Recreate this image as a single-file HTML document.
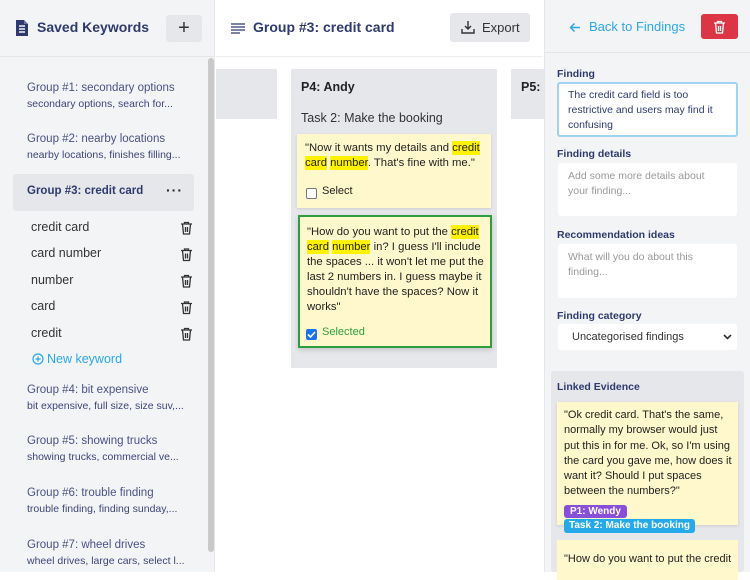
<!DOCTYPE html>
<html><head><style>
*{box-sizing:border-box;margin:0;padding:0}
body{width:750px;height:572px;overflow:hidden;font-family:"Liberation Sans",sans-serif;background:#fff;position:relative;color:#333}
.a{position:absolute;white-space:nowrap}
.nav{color:#2e3a6e}
.gt{font-size:11.5px;color:#4a5187;left:27px}
.gs{font-size:10.5px;color:#3d4479;left:27px}
.kw{font-size:12.5px;color:#333;left:31px}
.lbl{font-size:10.5px;font-weight:bold;color:#2e3a6e;left:557px}
.ta{background:#fff;border-radius:3px;font-size:10.5px;line-height:15px;color:#999;padding:6px 10px}
.hl{background:#fff200;padding:1px 0}
.card{background:#fff8cc;font-size:11.3px;line-height:15px;color:#222;padding:7px 8px}
</style></head><body>
<!-- left sidebar -->
<div class="a" style="left:0;top:0;width:215px;height:572px;background:#f3f4f6;border-right:1px solid #e4e6ea"></div>
<div class="a" style="left:0;top:56px;width:215px;height:1px;background:#e4e6ea"></div>
<svg class="a" style="left:15px;top:19px" width="14" height="18" viewBox="0 0 14 18"><path d="M1 1h8l4 4v12H1z" fill="#2e3a6e"/><path d="M4 7h6M4 10h6M4 13h6" stroke="#f3f4f6" stroke-width="1.4"/><path d="M9 1v4h4" fill="#6b74a5"/></svg>
<div class="a nav" style="left:37px;top:19px;font-size:14px;font-weight:bold">Saved Keywords</div>
<div class="a" style="left:166px;top:15px;width:36px;height:27px;background:#e5e7eb;border-radius:3px;text-align:center;font-size:20px;line-height:26px;color:#333">+</div>
<div class="a" style="left:208px;top:58px;width:6px;height:494px;background:#c9c9c9;border-radius:3px"></div>
<div class="a gt" style="top:82px">Group #1: secondary options</div>
<div class="a gs" style="top:98px">secondary options, search for...</div>
<div class="a gt" style="top:133px">Group #2: nearby locations</div>
<div class="a gs" style="top:149px">nearby locations, finishes filling...</div>
<div class="a" style="left:13px;top:174px;width:181px;height:37px;background:#e5e7eb;border-radius:3px"></div>
<div class="a" style="left:27px;top:185px;font-size:11.5px;font-weight:bold;color:#2e3a6e">Group #3: credit card</div>
<div class="a" style="left:166px;top:182px;font-size:14px;font-weight:bold;color:#222;letter-spacing:1px">···</div>
<div class="a kw" style="top:220px">credit card</div>
<div class="a kw" style="top:246px">card number</div>
<div class="a kw" style="top:273px">number</div>
<div class="a kw" style="top:299px">card</div>
<div class="a kw" style="top:326px">credit</div>
<svg class="a" style="left:180px;top:221px" width="13" height="120" viewBox="0 0 13 120"><g fill="none" stroke="#333" stroke-width="1.3"><g id="t"><path d="M1 3h11M4.5 3V1.5h4V3M2.5 3l1 10h6l1-10M5.5 6v5M7.5 6v5"/></g><use href="#t" y="26.5"/><use href="#t" y="53"/><use href="#t" y="79.5"/><use href="#t" y="106"/></g></svg>
<svg class="a" style="left:32px;top:353px" width="12" height="12" viewBox="0 0 12 12"><circle cx="6" cy="6" r="5" fill="none" stroke="#2aa8e8" stroke-width="1.2"/><path d="M6 3.5v5M3.5 6h5" stroke="#2aa8e8" stroke-width="1.2"/></svg>
<div class="a" style="left:47px;top:352px;font-size:12.5px;color:#2aa8e8">New keyword</div>
<div class="a gt" style="top:384px">Group #4: bit expensive</div>
<div class="a gs" style="top:400px">bit expensive, full size, size suv,...</div>
<div class="a gt" style="top:435px">Group #5: showing trucks</div>
<div class="a gs" style="top:451px">showing trucks, commercial ve...</div>
<div class="a gt" style="top:487px">Group #6: trouble finding</div>
<div class="a gs" style="top:503px">trouble finding, finding sunday,...</div>
<div class="a gt" style="top:539px">Group #7: wheel drives</div>
<div class="a gs" style="top:555px">wheel drives, large cars, select l...</div>
<!-- middle -->
<div class="a" style="left:216px;top:56px;width:327px;height:1px;background:#eceef1"></div>
<svg class="a" style="left:231px;top:23px" width="14" height="11"><path d="M0 1h14M0 4h14M0 7h14M0 10h9" stroke="#2e3a6e" stroke-width="1.2"/></svg>
<div class="a nav" style="left:253px;top:19px;font-size:14px;font-weight:bold">Group #3: credit card</div>
<div class="a" style="left:450px;top:13px;width:80px;height:29px;background:#e5e7eb;border-radius:3px"></div>
<svg class="a" style="left:461px;top:20px" width="14" height="14" viewBox="0 0 14 14"><path d="M7 1v8M4 6l3 3 3-3M1 9v4h12V9" fill="none" stroke="#333" stroke-width="1.4"/></svg>
<div class="a" style="left:482px;top:20px;font-size:13px;color:#333">Export</div>
<div class="a" style="left:216px;top:69px;width:61px;height:50px;background:#e5e7eb"></div>
<div class="a" style="left:291px;top:69px;width:206px;height:299px;background:#e5e7eb"></div>
<div class="a" style="left:511px;top:69px;width:40px;height:50px;background:#e5e7eb"></div>
<div class="a" style="left:301px;top:80px;font-size:12.5px;font-weight:bold;color:#222">P4: Andy</div>
<div class="a" style="left:521px;top:80px;font-size:12.5px;font-weight:bold;color:#222">P5:</div>
<div class="a" style="left:301px;top:111px;font-size:12.5px;color:#333">Task 2: Make the booking</div>
<div class="a card" style="left:297px;top:134px;width:194px;height:74px;box-shadow:0 1px 3px rgba(0,0,0,.12)">"Now it wants my details and <span class="hl">credit</span><br><span class="hl">card</span> <span class="hl">number</span>. That's fine with me."</div>
<div class="a" style="left:306px;top:188px;width:11px;height:11px;border:1px solid #777;border-radius:2px;background:#fff"></div>
<div class="a" style="left:322px;top:185px;font-size:11px;color:#222">Select</div>
<div class="a card" style="left:298px;top:215px;width:194px;height:133px;border:2px solid #2e9e3e;padding:8px 7px;box-shadow:0 2px 5px rgba(0,0,0,.15)">"How do you want to put the <span class="hl">credit</span><br><span class="hl">card</span> <span class="hl">number</span> in? I guess I'll include<br>the spaces ... it won't let me put the<br>last 2 numbers in. I guess maybe it<br>shouldn't have the spaces? Now it<br>works"</div>
<div class="a" style="left:306px;top:329px;width:11px;height:11px;background:#1a73e8;border-radius:2px"><svg width="11" height="11" style="display:block"><path d="M2 5.5l2.5 2.5L9 3" fill="none" stroke="#fff" stroke-width="1.6"/></svg></div>
<div class="a" style="left:322px;top:326px;font-size:11px;color:#2e9e3e">Selected</div>
<!-- right -->
<div class="a" style="left:544px;top:0;width:206px;height:572px;background:#f3f4f6;border-left:1px solid #e4e6ea"></div>
<div class="a" style="left:544px;top:52px;width:206px;height:1px;background:#e4e6ea"></div>
<svg class="a" style="left:569px;top:22px" width="12" height="11" viewBox="0 0 12 11"><path d="M11 5.5H1.5M5.5 1.5l-4 4 4 4" fill="none" stroke="#2aa8e8" stroke-width="1.5"/></svg>
<div class="a" style="left:589px;top:19px;font-size:13px;color:#2aa8e8">Back to Findings</div>
<div class="a" style="left:701px;top:14px;width:37px;height:25px;background:#dc3545;border-radius:3px"></div>
<svg class="a" style="left:713px;top:20px" width="13" height="14" viewBox="0 0 13 14"><path d="M1 3h11M4.5 3V1.5h4V3M2.5 3l1 10h6l1-10M5.5 6v5M7.5 6v5" fill="none" stroke="#fff" stroke-width="1.3"/></svg>
<div class="a lbl" style="top:68px">Finding</div>
<div class="a ta" style="left:557px;top:82px;width:181px;height:55px;border:2px solid #9fd3f0;color:#2e3a6e;padding:4px 9px;white-space:normal">The credit card field is too<br>restrictive and users may find it<br>confusing</div>
<div class="a lbl" style="top:148px">Finding details</div>
<div class="a ta" style="left:558px;top:163px;width:179px;height:53px">Add some more details about<br>your finding...</div>
<div class="a lbl" style="top:229px">Recommendation ideas</div>
<div class="a ta" style="left:558px;top:244px;width:179px;height:54px">What will you do about this<br>finding...</div>
<div class="a lbl" style="top:310px">Finding category</div>
<div class="a" style="left:558px;top:324px;width:179px;height:26px;background:#fff;border-radius:3px;font-size:11px;color:#333;padding:7px 0 0 14px">Uncategorised findings</div>
<svg class="a" style="left:723px;top:334px" width="9" height="7"><path d="M1 1l3.5 3.5L8 1" fill="none" stroke="#333" stroke-width="1.6"/></svg>
<div class="a" style="left:551px;top:371px;width:193px;height:201px;background:#e5e7eb;border-radius:3px"></div>
<div class="a lbl" style="top:381px">Linked Evidence</div>
<div class="a card" style="left:557px;top:402px;width:181px;height:123px;font-size:11px;line-height:15.3px;padding:6px 7px;box-shadow:0 1px 3px rgba(0,0,0,.12)">"Ok credit card. That's the same,<br>normally my browser would just<br>put this in for me. Ok, so I'm using<br>the card you gave me, how does it<br>want it? Should I put spaces<br>between the numbers?"</div>
<div class="a" style="left:564px;top:505px;height:13px;background:#8a4fd8;border-radius:3px;color:#fff;font-size:10px;font-weight:bold;padding:0 6px;line-height:13px">P1: Wendy</div>
<div class="a" style="left:564px;top:519px;height:14px;background:#25a9e8;border-radius:3px;color:#fff;font-size:10px;font-weight:bold;padding:0 5px;line-height:14px">Task 2: Make the booking</div>
<div class="a card" style="left:557px;top:540px;width:181px;height:40px;font-size:11px;padding:12px 7px">"How do you want to put the credit</div>
</body></html>
